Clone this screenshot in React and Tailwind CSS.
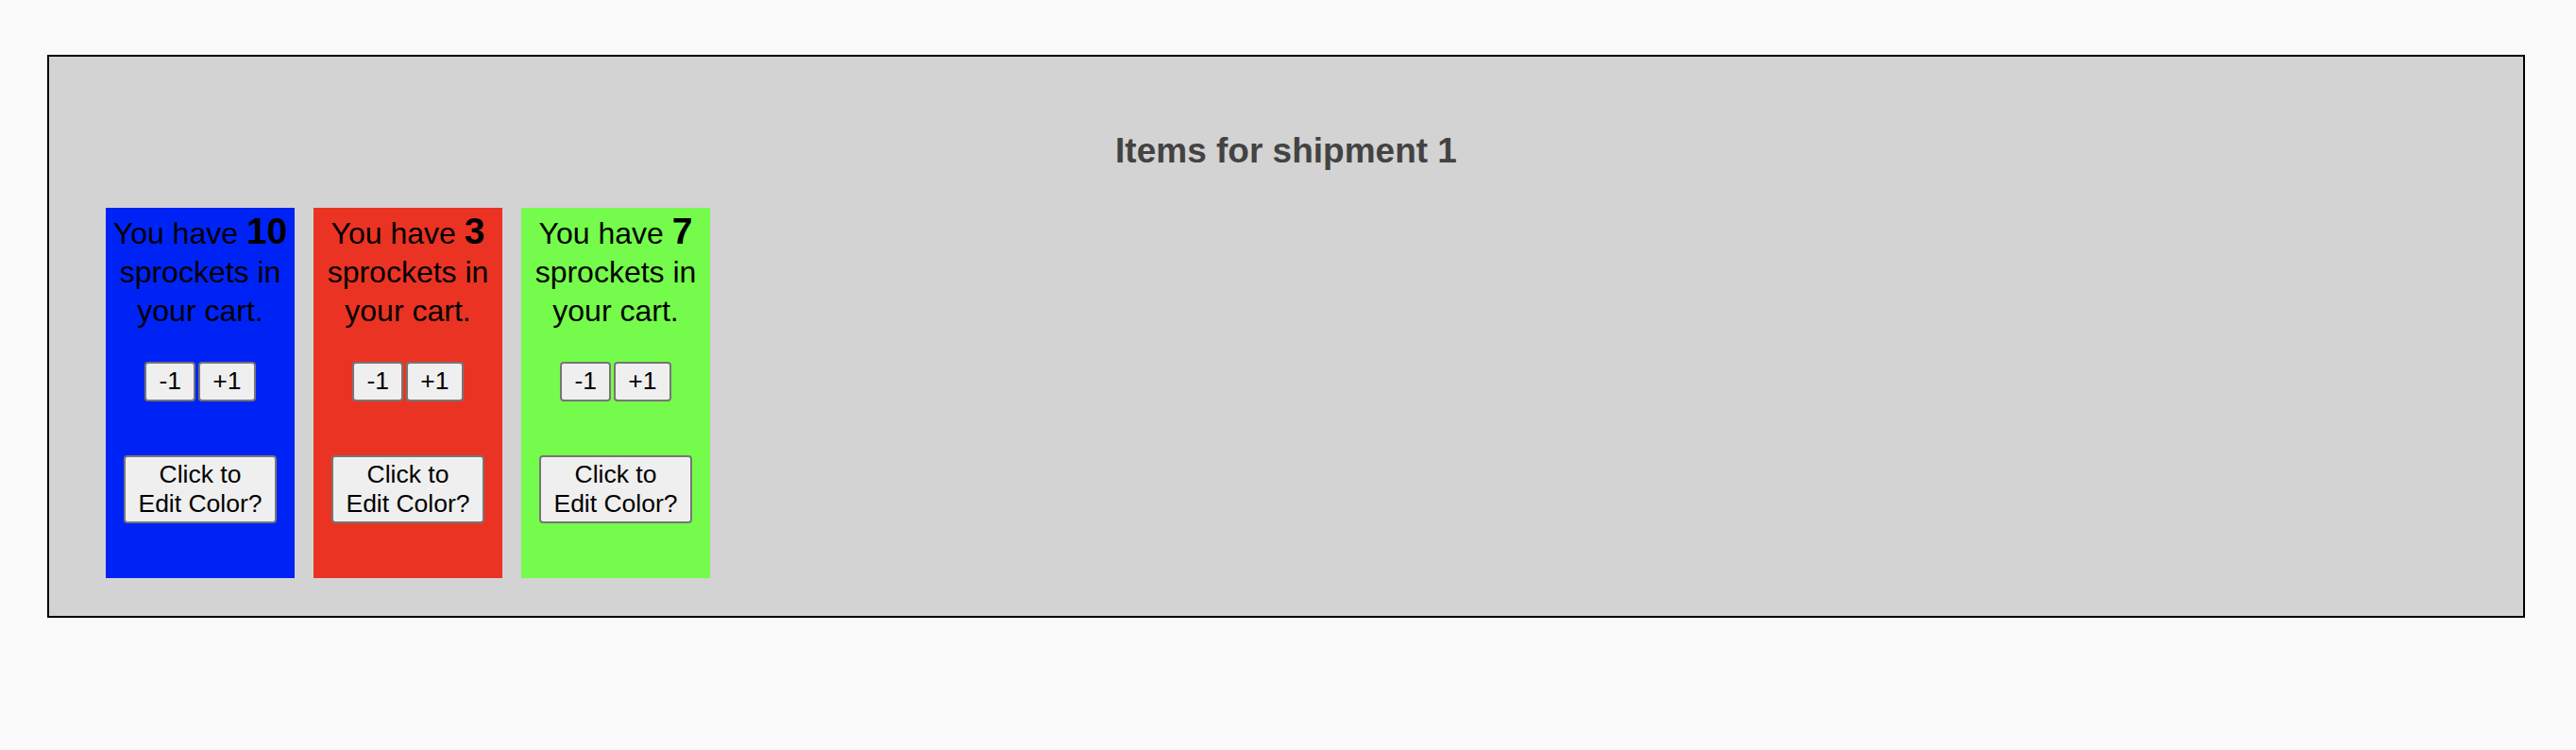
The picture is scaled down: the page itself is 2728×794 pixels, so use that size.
// Shipment cart cards

const items = [
  { count: 10, bg: 'bg-[#0023f5]' },
  { count: 3, bg: 'bg-[#ea3323]' },
  { count: 7, bg: 'bg-[#75fb4c]' },
]

const btn = 'rounded-[4px] border-2 border-[#767676] bg-[#efefef] text-black text-[26.5px] leading-[31px] py-[3.3px] px-[13.4px]'

function ItemCard({ count, bg }) {
  return (
    <div className={`${bg} w-[200px] h-[392px] flex flex-col items-center pt-[3.5px] text-center`}>
      <div className="text-[32px] leading-[41px] text-black">
        You have <strong className="font-bold text-[39px]">{count}</strong>
        <br />
        sprockets in
        <br />
        your cart.
      </div>
      <div className="mt-[33.5px] flex gap-[2.6px]">
        <button className={btn}>-1</button>
        <button className={btn}>+1</button>
      </div>
      <button className={`${btn} mt-[57px]`}>
        Click to
        <br />
        Edit Color?
      </button>
    </div>
  )
}

export default function App() {
  return (
    <div className="min-h-screen bg-[#fafafa] pt-[58px] font-['Liberation_Sans',Arial,sans-serif]">
      <div className="ml-[50px] w-[2624px] h-[596px] border-2 border-black bg-[#d3d3d3] pt-[78.6px] pl-[60px]">
        <h2 className="text-center text-[37px] leading-[42.5px] font-bold text-[#434343] -ml-[60px]">
          Items for shipment 1
        </h2>
        <div className="mt-[39px] flex gap-[20px]">
          {items.map((it) => (
            <ItemCard key={it.count} {...it} />
          ))}
        </div>
      </div>
    </div>
  )
}
